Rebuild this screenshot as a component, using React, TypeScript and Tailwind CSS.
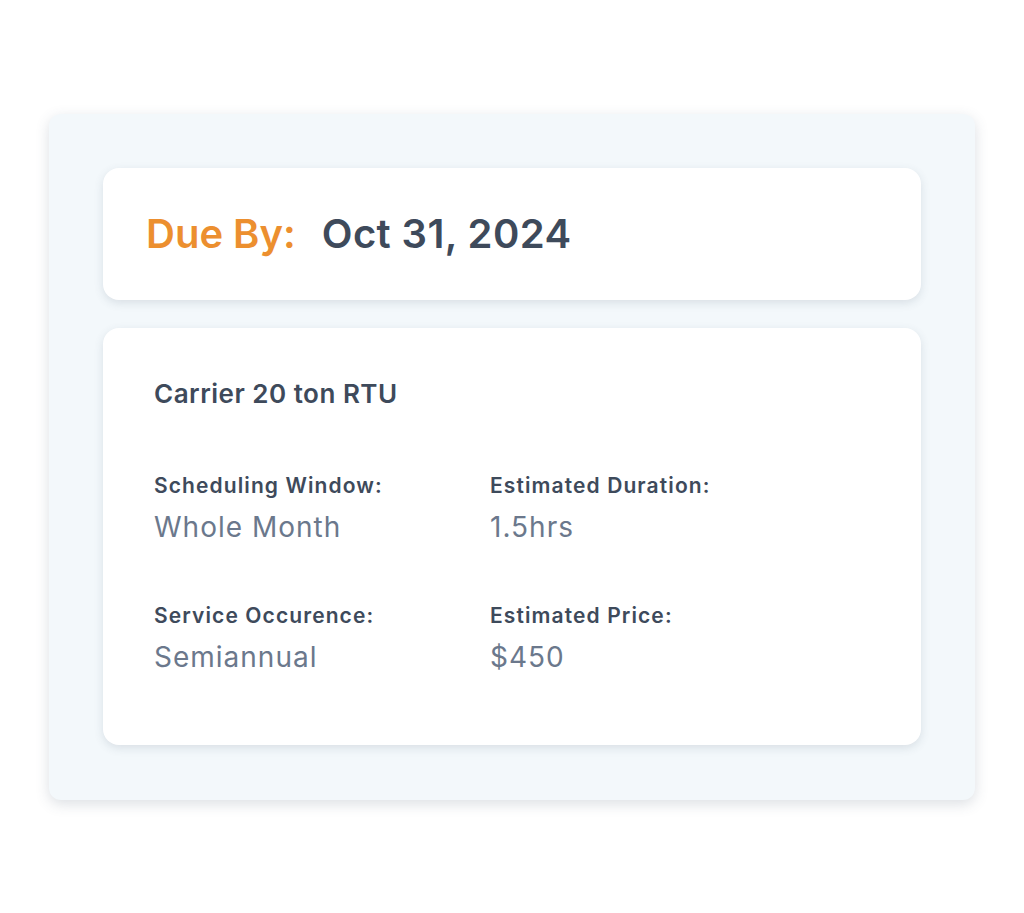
import React from "react";

const Field = ({ label, value }: { label: string; value: string }) => (
  <div className="flex flex-col">
    <div className="text-[21px] leading-[24px] font-semibold tracking-[1.1px] text-[#3e4a5b]">{label}</div>
    <div className="mt-[12px] text-[28px] leading-[34px] tracking-[1px] text-[#6b788c]">{value}</div>
  </div>
);

export default function App() {
  return (
    <div
      className="w-[1024px] h-[913px] bg-white pt-[114px] pl-[49px]"
      style={{ fontFamily: "Inter, 'Noto Sans', sans-serif" }}
    >
      <div className="w-[926px] h-[686px] rounded-[12px] bg-[#f3f8fb] shadow-[0_4px_14px_rgba(60,80,100,0.18)] px-[54px] pt-[54px] flex flex-col gap-[28px]">
        <div className="h-[132px] rounded-[16px] bg-white shadow-[0_3px_10px_rgba(60,80,100,0.14)] flex items-center pl-[43px] gap-[26px]">
          <span className="text-[40px] font-semibold text-[#ec8f2f]">Due By:</span>
          <span className="text-[40px] font-semibold tracking-[0.4px] text-[#3e4a5b]">Oct 31, 2024</span>
        </div>
        <div className="h-[417px] rounded-[16px] bg-white shadow-[0_3px_10px_rgba(60,80,100,0.14)] pl-[51px] pt-[50px]">
          <div className="text-[26px] leading-[32px] font-semibold tracking-[0.5px] text-[#3e4a5b]">Carrier 20 ton RTU</div>
          <div className="mt-[64px] grid grid-cols-[336px_1fr] gap-y-[60px]">
            <Field label="Scheduling Window:" value="Whole Month" />
            <Field label="Estimated Duration:" value="1.5hrs" />
            <Field label="Service Occurence:" value="Semiannual" />
            <Field label="Estimated Price:" value="$450" />
          </div>
        </div>
      </div>
    </div>
  );
}
